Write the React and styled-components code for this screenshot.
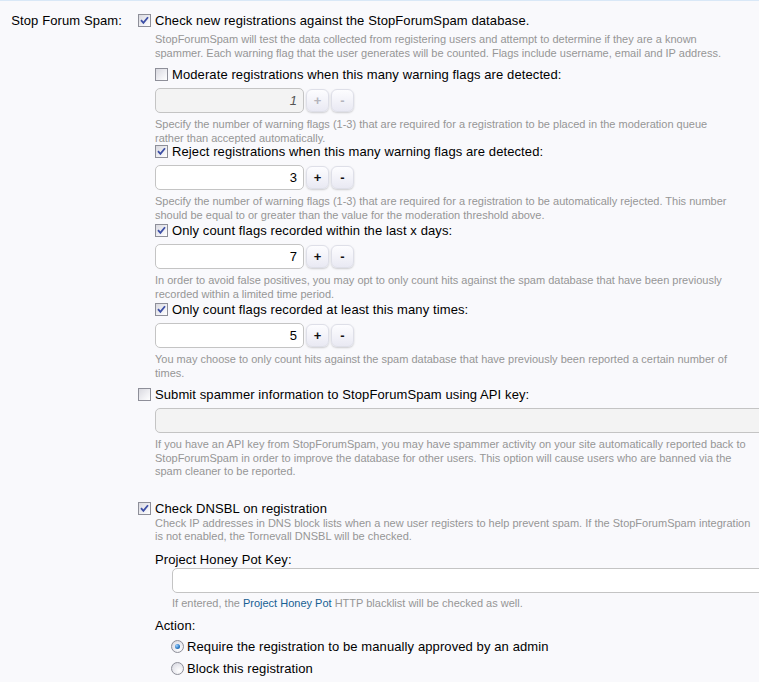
import styled, { createGlobalStyle } from "styled-components";

const GlobalStyle = createGlobalStyle`
  html, body {
    margin: 0;
    padding: 0;
    overflow: hidden;
    background: #f9f9fc;
  }
  body {
    font-family: "Liberation Sans", Arial, sans-serif;
    color: #000;
  }
`;

const Page = styled.div`
  width: 760px;
  border-top: 1px solid #d9e8f7;
  padding-top: 11px;
`;

const CtrlUnit = styled.div`
  display: grid;
  grid-template-columns: 138px 1fr;
`;

const UnitLabel = styled.div`
  font-size: 13px;
  line-height: 17px;
  letter-spacing: 0.1px;
  text-align: right;
  padding-right: 16px;
`;

const Options = styled.div`
  display: flex;
  flex-direction: column;
`;

const CheckRow = styled.label`
  display: flex;
  align-items: center;
  gap: ${(p) => p.$gap || 4}px;
  font-size: 13px;
  line-height: 17px;
  letter-spacing: 0.1px;
  white-space: nowrap;
  margin-top: ${(p) => p.$top || 0}px;
  margin-left: ${(p) => p.$indent || 0}px;
`;

const Box = styled.span`
  flex-shrink: 0;
  width: 13px;
  height: 13px;
  box-sizing: border-box;
  border: 1px solid #8e8f99;
  background: linear-gradient(135deg, #d9d9e0 0%, #f4f4f7 70%, #fff 100%);
  display: flex;
  align-items: center;
  justify-content: center;
`;

const Radio = styled.span`
  flex-shrink: 0;
  width: 13px;
  height: 13px;
  box-sizing: border-box;
  border-radius: 50%;
  border: 1px solid #8e8f99;
  background: radial-gradient(circle at 65% 70%, #fff 0%, #e6e6ec 60%, #cfd0d8 100%);
  display: flex;
  align-items: center;
  justify-content: center;
  &::after {
    content: "";
    display: ${(p) => (p.$checked ? "block" : "none")};
    width: 5px;
    height: 5px;
    border-radius: 50%;
    background: radial-gradient(circle at 35% 35%, #9fd2ff 0%, #2f7cc7 55%, #164d86 100%);
  }
`;

const Explain = styled.div`
  font-size: 11px;
  line-height: 13.5px;
  white-space: nowrap;
  color: #969696;
  margin-top: ${(p) => p.$top || 0}px;
  margin-left: ${(p) => p.$indent || 0}px;
  a {
    color: #176093;
    text-decoration: none;
  }
`;

const Dependent = styled.div`
  display: flex;
  flex-direction: column;
  padding-left: 17px;
`;

const Spin = styled.div`
  display: flex;
  gap: 2px;
  margin-top: 5px;
`;

const TextBox = styled.input`
  box-sizing: border-box;
  width: ${(p) => p.$width || "149px"};
  height: 25px;
  margin: ${(p) => p.$margin || "0"};
  border: 1px solid #c4c4c4;
  border-radius: 5px;
  background: ${(p) => (p.disabled ? "#f3f3f3" : "#fff")};
  font-family: "Liberation Sans", Arial, sans-serif;
  font-size: 13px;
  font-style: ${(p) => (p.disabled ? "italic" : "normal")};
  color: ${(p) => (p.disabled ? "#555" : "#000")};
  text-align: right;
  padding: 0 6px;
  outline: none;
`;

const SpinButton = styled.button`
  width: 23px;
  height: 23px;
  margin-top: 1px;
  padding: 0;
  border: 1px solid #dedfe8;
  border-radius: 6px;
  background: linear-gradient(#fdfdff, #e9e9f3);
  box-shadow: 0 1px 2px rgba(0, 0, 0, 0.18);
  font-family: "Liberation Sans", Arial, sans-serif;
  font-size: 13px;
  font-weight: bold;
  color: ${(p) => (p.disabled ? "#b4b4bc" : "#111")};
`;

const FieldLabel = styled.div`
  font-size: 13px;
  line-height: 17px;
  letter-spacing: 0.1px;
  margin-top: ${(p) => p.$top || 0}px;
`;

function Checkbox({ checked }) {
  return (
    <Box>
      {checked && (
        <svg width="9" height="9" viewBox="0 0 9 9">
          <path d="M1 4.2 L3.4 6.8 L8 1.2" fill="none" stroke="#3d4fa6" strokeWidth="1.8" />
        </svg>
      )}
    </Box>
  );
}

function NumberUnit({ value, disabled }) {
  return (
    <Spin>
      <TextBox type="text" value={value} disabled={disabled} readOnly />
      <SpinButton disabled={disabled}>+</SpinButton>
      <SpinButton disabled={disabled}>-</SpinButton>
    </Spin>
  );
}

function App() {
  return (
    <Page>
      <GlobalStyle />
      <CtrlUnit>
        <UnitLabel>Stop Forum Spam:</UnitLabel>
        <Options>
          <CheckRow>
            <Checkbox checked />
            Check new registrations against the StopForumSpam database.
          </CheckRow>
          <Explain $indent={17} $top={4}>
            StopForumSpam will test the data collected from registering users and attempt to determine if they are a known
            <br />
            spammer. Each warning flag that the user generates will be counted. Flags include username, email and IP address.
          </Explain>
          <Dependent>
            <CheckRow $top={6}>
              <Checkbox />
              Moderate registrations when this many warning flags are detected:
            </CheckRow>
            <NumberUnit value="1" disabled />
            <Explain $top={5}>
              Specify the number of warning flags (1-3) that are required for a registration to be placed in the moderation queue
              <br />
              rather than accepted automatically.
            </Explain>
            <CheckRow $top={-2}>
              <Checkbox checked />
              Reject registrations when this many warning flags are detected:
            </CheckRow>
            <NumberUnit value="3" />
            <Explain $top={5}>
              Specify the number of warning flags (1-3) that are required for a registration to be automatically rejected. This number
              <br />
              should be equal to or greater than the value for the moderation threshold above.
            </Explain>
            <CheckRow>
              <Checkbox checked />
              Only count flags recorded within the last x days:
            </CheckRow>
            <NumberUnit value="7" />
            <Explain $top={5}>
              In order to avoid false positives, you may opt to only count hits against the spam database that have been previously
              <br />
              recorded within a limited time period.
            </Explain>
            <CheckRow>
              <Checkbox checked />
              Only count flags recorded at least this many times:
            </CheckRow>
            <NumberUnit value="5" />
            <Explain $top={5}>
              You may choose to only count hits against the spam database that have previously been reported a certain number of
              <br />
              times.
            </Explain>
          </Dependent>
          <CheckRow $top={6}>
            <Checkbox />
            Submit spammer information to StopForumSpam using API key:
          </CheckRow>
          <Dependent>
            <TextBox type="text" value="" disabled readOnly $width="calc(100% + 8px)" $margin="5px 0 0 0" />
            <Explain $top={5}>
              If you have an API key from StopForumSpam, you may have spammer activity on your site automatically reported back to
              <br />
              StopForumSpam in order to improve the database for other users. This option will cause users who are banned via the
              <br />
              spam cleaner to be reported.
            </Explain>
          </Dependent>
          <CheckRow $top={21}>
            <Checkbox checked />
            Check DNSBL on registration
          </CheckRow>
          <Dependent>
            <Explain>
              Check IP addresses in DNS block lists when a new user registers to help prevent spam. If the StopForumSpam integration
              <br />
              is not enabled, the Tornevall DNSBL will be checked.
            </Explain>
            <FieldLabel $top={7}>Project Honey Pot Key:</FieldLabel>
            <Dependent>
              <TextBox type="text" value="" readOnly $width="calc(100% + 8px)" />
              <Explain $top={4}>
                If entered, the <a href="#honeypot">Project Honey Pot</a> HTTP blacklist will be checked as well.
              </Explain>
            </Dependent>
            <FieldLabel $top={7}>Action:</FieldLabel>
            <CheckRow $indent={16} $top={4} $gap={3}>
              <Radio $checked />
              Require the registration to be manually approved by an admin
            </CheckRow>
            <CheckRow $indent={16} $top={5} $gap={3}>
              <Radio />
              Block this registration
            </CheckRow>
          </Dependent>
        </Options>
      </CtrlUnit>
    </Page>
  );
}

export default App;
